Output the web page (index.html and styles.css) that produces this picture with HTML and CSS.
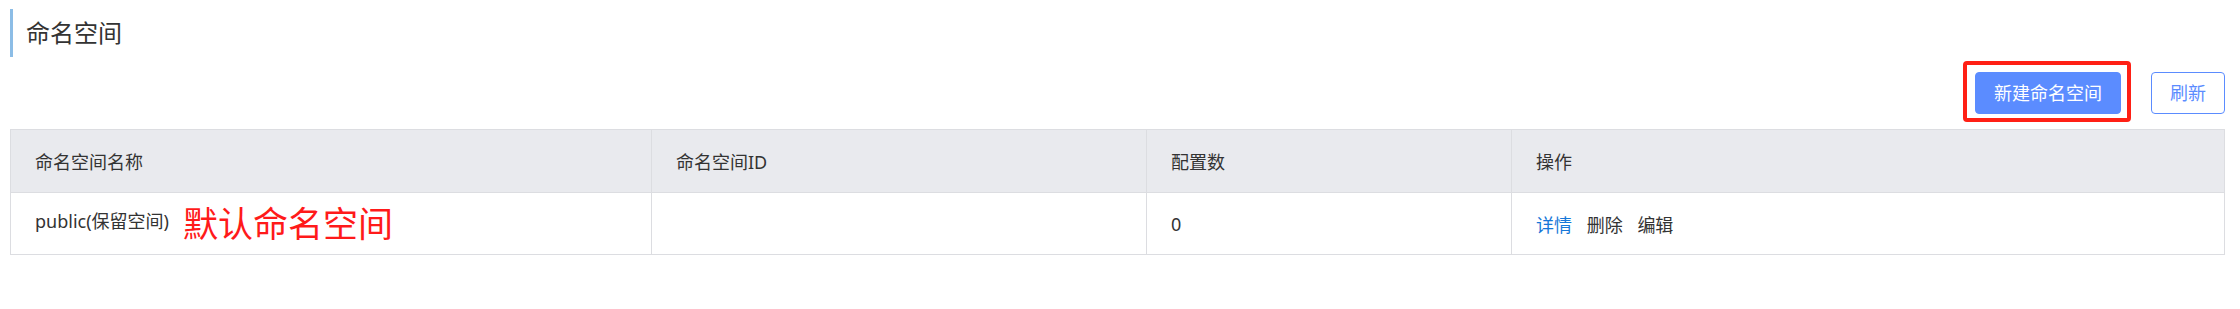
FILE: index.html
```html
<!DOCTYPE html>
<html lang="zh-CN">
<head>
    <meta charset="UTF-8">
    <title>命名空间</title>
    <link rel="stylesheet" href="styles.css">
</head>
<body>
    <div id="page">
        <h2 class="pageTitle">命名空间</h2>
        <div class="toolbar">
            <a href="javascript:;" class="btn btnPrimary">新建命名空间</a>
            <a href="javascript:;" class="btn btnGhost">刷新</a>
        </div>
        <table class="nsTable">
            <colgroup>
                <col style="width: 641px">
                <col style="width: 495px">
                <col style="width: 365px">
                <col>
            </colgroup>
            <thead>
                <tr>
                    <th>命名空间名称</th>
                    <th>命名空间ID</th>
                    <th>配置数</th>
                    <th>操作</th>
                </tr>
            </thead>
            <tbody>
                <tr>
                    <td>public(保留空间)<span class="mark">默认命名空间</span></td>
                    <td></td>
                    <td>0</td>
                    <td class="ops">
                        <a href="javascript:;" class="link">详情</a>
                        <a href="javascript:;">删除</a>
                        <a href="javascript:;">编辑</a>
                    </td>
                </tr>
            </tbody>
        </table>
    </div>
</body>
</html>
```

FILE: styles.css
```css
* {
    margin: 0;
    padding: 0;
    box-sizing: border-box;
}

body {
    font-family: "Noto Sans", "Noto Sans CJK SC", sans-serif;
    color: #333;
    background: #fff;
}

a {
    text-decoration: none;
}

#page {
    padding: 9px 15px 0 10px;
}

.pageTitle {
    height: 48px;
    line-height: 48px;
    border-left: 3px solid #8cbde6;
    padding-left: 13px;
    font-size: 24px;
    font-weight: normal;
    color: #333;
}

.toolbar {
    display: flex;
    justify-content: flex-end;
    gap: 30px;
    margin-top: 15px;
}

.btn {
    height: 42px;
    line-height: 40px;
    border: 1px solid #5b8cff;
    border-radius: 4px;
    font-size: 18px;
    text-align: center;
}

.btnPrimary {
    position: relative;
    width: 146px;
    background: #5b8cff;
    color: #fff;
}

/* 标注用的红框 */
.btnPrimary::after {
    content: "";
    position: absolute;
    left: -13px;
    right: -11px;
    top: -12px;
    bottom: -9px;
    border: 4px solid #ff2015;
    border-radius: 4px;
}

.btnGhost {
    width: 74px;
    background: #fff;
    color: #5b8cff;
}

.nsTable {
    width: 100%;
    margin-top: 15px;
    border-collapse: collapse;
    table-layout: fixed;
    border: 1px solid #dcdde1;
    font-size: 18px;
}

.nsTable th,
.nsTable td {
    border: 1px solid #dcdde1;
    padding: 0 24px;
    text-align: left;
    font-weight: normal;
    color: #333;
    white-space: nowrap;
}

.nsTable th {
    height: 63px;
    background: #e9eaee;
}

.nsTable td {
    height: 62px;
}

.mark {
    margin-left: 14px;
    font-size: 35px;
    color: #ff1a1a;
    vertical-align: middle;
    line-height: 1;
}

.ops a {
    color: #333;
    margin-right: 10px;
}

.ops .link {
    color: #1677d8;
}
```
